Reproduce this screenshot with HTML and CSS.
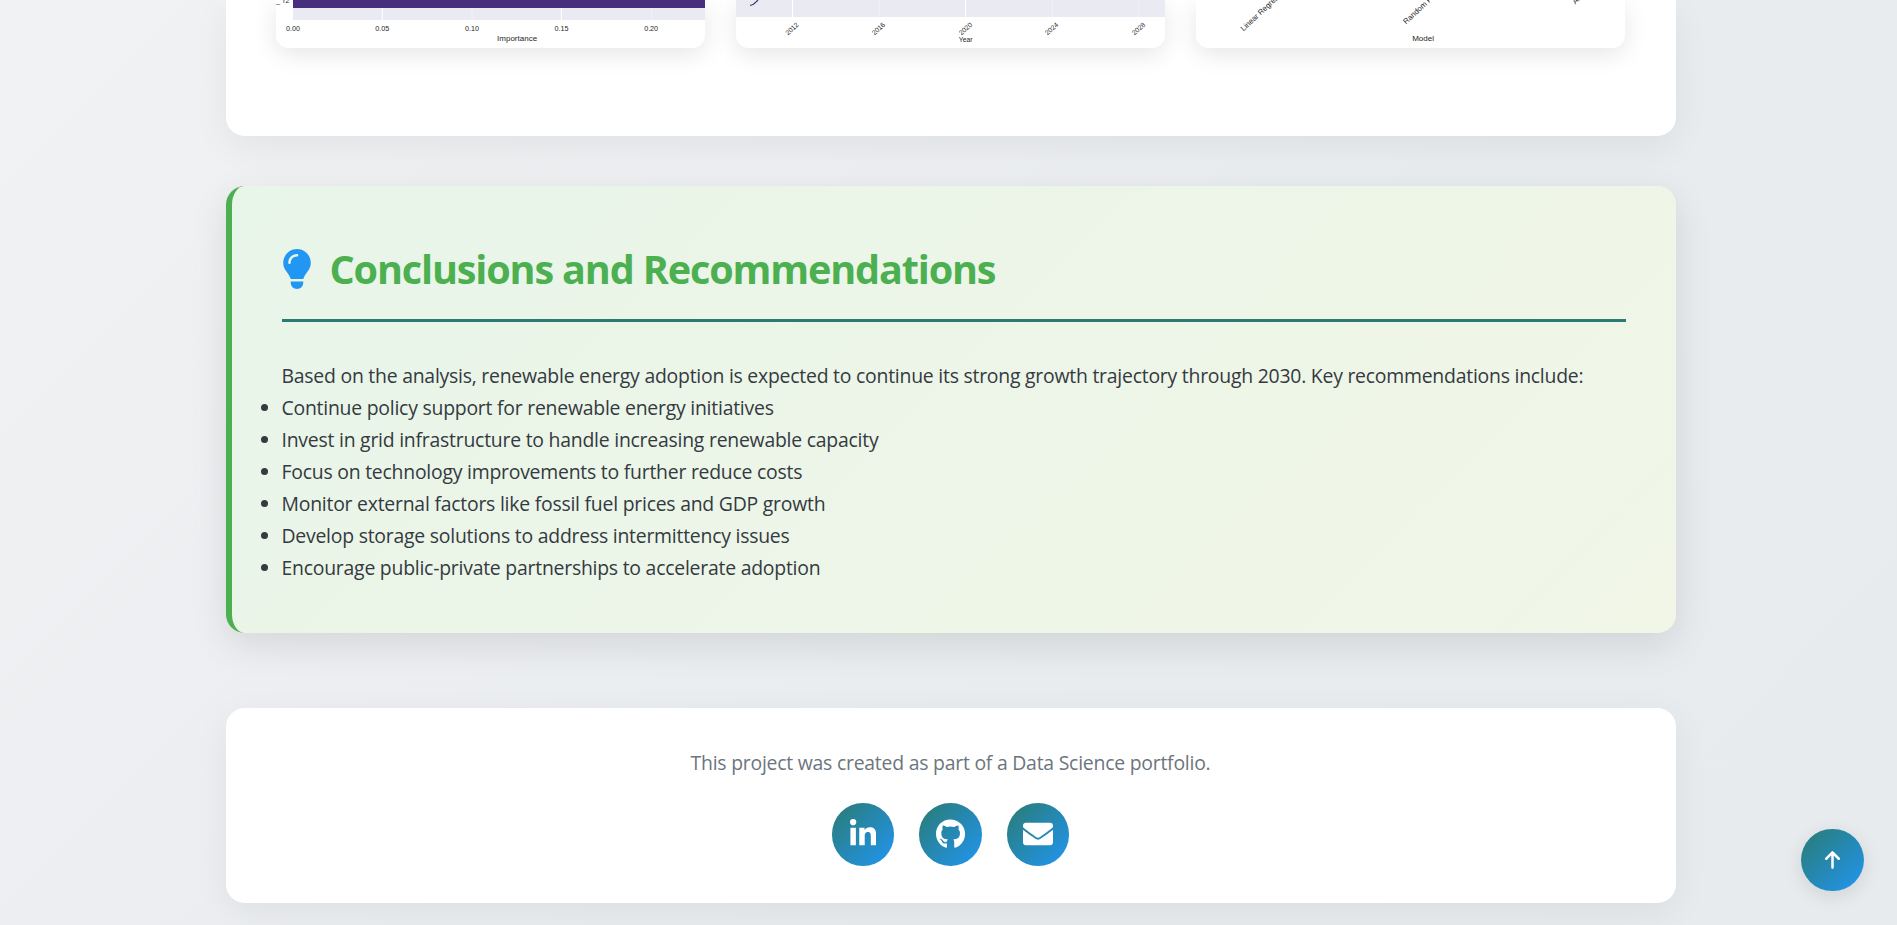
FILE: index.html
```html
<!DOCTYPE html>
<html lang="en">
<head>
<meta charset="utf-8">
<title>Renewable Energy Analysis</title>
<link rel="stylesheet" href="styles.css">
</head>
<body>
<main class="container">
  <section class="card charts">
    <svg class="chart" viewBox="0 0 429 48" preserveAspectRatio="none">
      <rect class="plot" x="17" y="0" width="412" height="20"/>
      <path class="grid" d="M106.3 0V20M285.3 0V20"/>
      <path class="grid faint" d="M196 0V20M375.3 0V20"/>
      <rect class="bar" x="17" y="0" width="412" height="8"/>
      <text class="tick" x="0" y="2.500">_</text><text class="tick" x="7" y="2.500">r2</text>
      <g class="tick mid"><text x="17" y="31">0.00</text><text x="106.300" y="31">0.05</text><text x="196" y="31">0.10</text><text x="285.300" y="31">0.15</text><text x="375" y="31">0.20</text></g>
      <text class="axis" x="241" y="41">Importance</text>
    </svg>
    <svg class="chart" viewBox="0 0 429 48" preserveAspectRatio="none">
      <rect class="plot" x="0" y="0" width="429" height="17"/>
      <path class="grid" d="M56.500 0V17M229.500 0V17"/>
      <path class="grid faint" d="M143 0V17M316.500 0V17M402.500 0V17"/>
      <path class="trend" d="M14 5.500C18 5 20 2 22 0"/>
      <g class="tick mid small"><text transform="translate(57.500 30.500) rotate(-42)">2012</text><text transform="translate(144 30.500) rotate(-42)">2016</text><text transform="translate(231 30.500) rotate(-42)">2020</text><text transform="translate(317 30.500) rotate(-42)">2024</text><text transform="translate(404 30.500) rotate(-42)">2028</text></g>
      <text class="axis small" x="229.500" y="42.500">Year</text>
    </svg>
    <svg class="chart" viewBox="0 0 429 48" preserveAspectRatio="none">
      <g class="model"><text transform="translate(47.500 31.500) rotate(-43)">Linear Regression</text><text transform="translate(210 24.500) rotate(-43)">Random Forest</text><text transform="translate(379 4.500) rotate(-43)">ARIMA</text></g>
      <text class="axis" x="227" y="41">Model</text>
    </svg>
  </section>

  <section class="card conclusion">
    <h2 class="title">
      <svg class="bulb" viewBox="0 0 384 512"><path d="M272 384c9.600-31.900 29.500-59.100 49.200-86.200c5.200-7.100 10.400-14.200 15.400-21.400c19.800-28.500 31.400-63 31.400-100.300C368 78.800 289.200 0 192 0S16 78.800 16 176c0 37.300 11.600 71.900 31.400 100.300c5 7.200 10.200 14.300 15.400 21.400c19.800 27.100 39.700 54.400 49.200 86.200H272zM192 512c44.200 0 80-35.800 80-80V416H112v16c0 44.200 35.800 80 80 80zM112 176c0 8.800-7.200 16-16 16s-16-7.200-16-16c0-61.900 50.100-112 112-112c8.800 0 16 7.200 16 16s-7.200 16-16 16c-44.200 0-80 35.800-80 80z"/></svg>
      <span>Conclusions and Recommendations</span>
    </h2>
    <p class="lead">Based on the analysis, renewable energy adoption is expected to continue its strong growth trajectory through 2030. Key recommendations include:</p>
    <ul class="list">
      <li>Continue policy support for renewable energy initiatives</li>
      <li>Invest in grid infrastructure to handle increasing renewable capacity</li>
      <li>Focus on technology improvements to further reduce costs</li>
      <li>Monitor external factors like fossil fuel prices and GDP growth</li>
      <li>Develop storage solutions to address intermittency issues</li>
      <li>Encourage public-private partnerships to accelerate adoption</li>
    </ul>
  </section>

  <footer class="card footer">
    <p class="note">This project was created as part of a Data Science portfolio.</p>
    <nav class="social">
      <a class="round"><svg class="icon" viewBox="0 0 448 512"><path d="M100.280 448H7.400V148.900h92.880zM53.790 108.100C24.090 108.100 0 83.500 0 53.800a53.790 53.790 0 0 1 107.580 0c0 29.700-24.100 54.300-53.790 54.300zM447.900 448h-92.680V302.400c0-34.700-.7-79.200-48.290-79.200-48.290 0-55.690 37.700-55.690 76.700V448h-92.780V148.900h89.080v40.800h1.300c12.400-23.500 42.690-48.300 87.880-48.300 94 0 111.280 61.900 111.280 142.300V448z"/></svg></a>
      <a class="round"><svg class="icon" viewBox="0 0 496 512"><path d="M165.900 397.400c0 2-2.300 3.600-5.200 3.600-3.300.3-5.600-1.300-5.600-3.600 0-2 2.300-3.600 5.200-3.600 3-.3 5.600 1.300 5.600 3.600zm-31.100-4.500c-.7 2 1.300 4.300 4.300 4.900 2.600 1 5.600 0 6.200-2s-1.300-4.300-4.300-5.200c-2.600-.7-5.500.3-6.200 2.300zm44.200-1.700c-2.900.7-4.900 2.600-4.600 4.900.3 2 2.900 3.300 5.900 2.600 2.900-.7 4.900-2.600 4.600-4.600-.3-1.900-3-3.200-5.900-2.900zM244.800 8C106.100 8 0 113.300 0 252c0 110.900 69.800 205.800 169.500 239.200 12.800 2.300 17.300-5.600 17.300-12.100 0-6.200-.3-40.400-.3-61.400 0 0-70 15-84.700-29.800 0 0-11.400-29.100-27.800-36.600 0 0-22.900-15.700 1.600-15.400 0 0 24.900 2 38.600 25.800 21.900 38.600 58.600 27.500 72.900 20.900 2.300-16 8.800-27.100 16-33.700-55.900-6.200-112.300-14.300-112.300-110.500 0-27.500 7.600-41.300 23.600-58.900-2.600-6.500-11.100-33.300 2.600-67.900 20.900-6.500 69 27 69 27 20-5.600 41.500-8.500 62.800-8.500s42.800 2.900 62.800 8.500c0 0 48.100-33.600 69-27 13.700 34.700 5.200 61.400 2.600 67.900 16 17.700 25.800 31.500 25.800 58.900 0 96.500-58.900 104.200-114.800 110.500 9.200 7.900 17 22.900 17 46.400 0 33.700-.3 75.400-.3 83.600 0 6.500 4.600 14.400 17.300 12.100C428.200 457.800 496 362.900 496 252 496 113.300 383.500 8 244.800 8z"/></svg></a>
      <a class="round"><svg class="icon" viewBox="0 0 512 512"><path d="M502.300 190.800c3.900-3.100 9.700-.2 9.700 4.700V400c0 26.500-21.500 48-48 48H48c-26.500 0-48-21.500-48-48V195.600c0-5 5.700-7.800 9.700-4.700 22.400 17.400 52.100 39.500 154.100 113.600 21.100 15.400 56.700 47.800 92.200 47.600 35.700.3 72-32.800 92.300-47.600 102-74.100 131.600-96.300 154-113.700zM256 320c23.200.4 56.600-29.200 73.400-41.400 132.700-96.300 142.800-104.700 173.400-128.700 5.800-4.500 9.200-11.500 9.200-18.900v-19c0-26.500-21.500-48-48-48H48c-26.500 0-48 21.500-48 48v19c0 7.400 3.400 14.300 9.200 18.900 30.600 23.900 40.700 32.400 173.400 128.700 16.800 12.200 50.200 41.800 73.400 41.400z"/></svg></a>
    </nav>
  </footer>
</main>
<a class="round to-top"><svg class="arrow" viewBox="0 0 384 512"><path d="M214.600 41.400c-12.500-12.500-32.800-12.500-45.300 0l-160 160c-12.500 12.500-12.500 32.800 0 45.300s32.800 12.500 45.300 0L160 141.200V448c0 17.700 14.300 32 32 32s32-14.300 32-32V141.200L329.400 246.600c12.500 12.500 32.800 12.500 45.300 0s12.500-32.800 0-45.300l-160-160z"/></svg></a>
</body>
</html>
```
FILE: styles.css
```css
* { box-sizing: border-box; margin: 0; padding: 0; }
body {
  height: 925px;
  overflow: hidden;
  font-family: "Segoe UI", "Open Sans", "Noto Sans", sans-serif;
  font-size: 19.4px;
  letter-spacing: -0.23px;
  line-height: 32px;
  color: #343a40;
  background: linear-gradient(135deg, #f1f2f4 0%, #e9ecef 60%, #e7ebee 100%);
}
.container { width: 1450px; margin: 0 auto; padding: 0; transform: translateX(2px); }
.card { border-radius: 18.75px; background: #fff; box-shadow: 0 10px 37px rgba(0, 0, 0, .06); }

.charts {
  height: 136px;
  padding: 0 50px;
  display: grid;
  grid-template-columns: repeat(3, 1fr);
  gap: 31.25px;
  border-radius: 0 0 18.75px 18.75px;
}
.chart {
  width: 100%;
  height: 48px;
  border-radius: 0 0 12.5px 12.5px;
  background: #fff;
  box-shadow: 0 6px 25px rgba(0, 0, 0, .1);
  overflow: hidden;
  font-family: "Liberation Sans", Arial, sans-serif;
  letter-spacing: 0;
}
.plot { fill: #eaeaf2; }
.grid { fill: none; stroke: #fff; stroke-width: 1; }
.faint { opacity: .35; }
.bar { fill: #482f7d; }
.trend { fill: none; stroke: #482f7d; stroke-width: 1.2; }
.tick { font-size: 7.2px; fill: #262626; }
.mid, .axis { text-anchor: middle; }
.axis { font-size: 8px; fill: #262626; }
.small { font-size: 6.8px; }
.model { font-size: 7.7px; fill: #262626; }

.conclusion {
  height: 447px;
  margin-top: 50px;
  padding: 50px;
  border-left: 6px solid #4caf50;
  background: linear-gradient(135deg, #e8f5e9, #f1f6e7);
  box-shadow: 0 12px 37px rgba(0, 0, 0, .1);
}
.title {
  display: flex;
  align-items: center;
  gap: 18px;
  height: 86px;
  padding-bottom: 18px;
  border-bottom: 3px solid #2a7b72;
  font-size: 39.6px;
  letter-spacing: -1.15px;
  line-height: 64px;
  font-weight: 700;
  color: #4caf50;
}
.bulb { width: 30px; height: 40px; fill: #2196f3; }
.lead { margin-top: 38px; white-space: nowrap; }

.footer {
  margin-top: 75px;
  height: 195px;
  padding: 39px 38px 0;
  text-align: center;
}
.note { color: #6c757d; }
.social { display: flex; justify-content: center; gap: 25px; margin-top: 24px; }
.round {
  width: 62.5px;
  height: 62.5px;
  border-radius: 50%;
  display: flex;
  align-items: center;
  justify-content: center;
  background: linear-gradient(135deg, #2a7b72, #2196f3);
}
.icon { height: 30px; fill: #fff; }
.arrow { height: 20px; fill: #fff; }
.to-top {
  position: fixed;
  right: 33.5px;
  bottom: 34px;
  box-shadow: 0 5px 19px rgba(0, 0, 0, .1);
}
```
